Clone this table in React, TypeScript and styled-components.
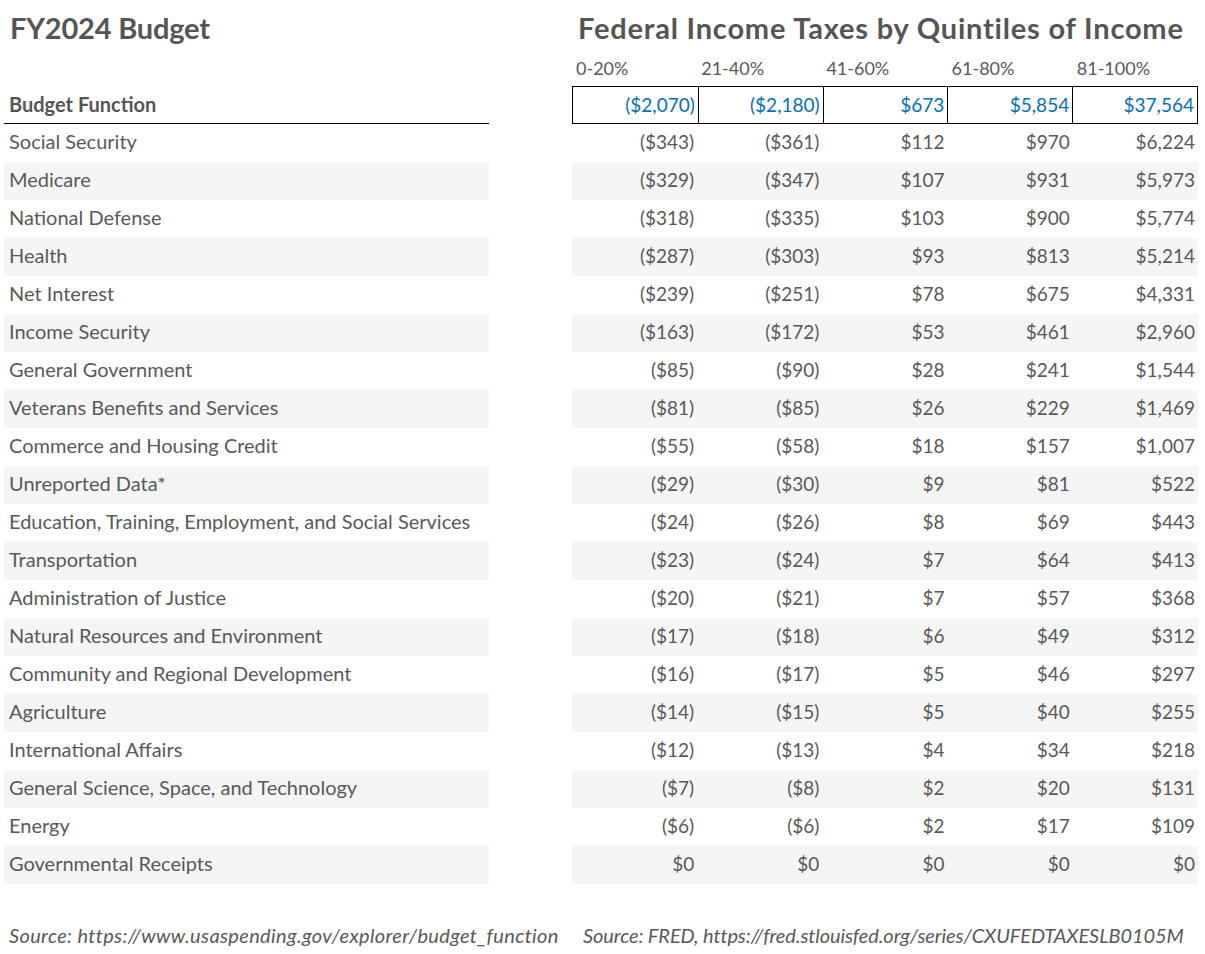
import React from "react";
import styled, { createGlobalStyle } from "styled-components";

const GlobalStyle = createGlobalStyle`
  body {
    margin: 0;
    background: #ffffff;
    font-family: "Lato", "Liberation Sans", sans-serif;
    color: #595959;
  }
`;

const Page = styled.div`
  width: 1205px;
  padding: 0 0 0 4px;
  box-sizing: border-box;
`;

const Tables = styled.div`
  display: grid;
  grid-template-columns: 485px 626px;
  column-gap: 83px;
`;

const Panel = styled.div`
  display: flex;
  flex-direction: column;
`;

const Title = styled.h1<{ $indent: number; $spacing: number }>`
  margin: 0;
  height: 58px;
  padding: 11px 0 0 ${(p) => p.$indent}px;
  box-sizing: border-box;
  font-size: 29px;
  font-weight: 700;
  letter-spacing: ${(p) => p.$spacing}px;
  color: #555555;
  line-height: 34px;
  white-space: nowrap;
`;

const LabelRow = styled.div`
  height: 28px;
  display: grid;
  grid-template-columns: repeat(5, 1fr);
  align-items: start;
`;

const Label = styled.div`
  padding-left: 4px;
  font-size: 18px;
  line-height: 20px;
`;

const HeadLeft = styled.div`
  height: 38px;
  box-sizing: border-box;
  border-bottom: 1px solid #000;
  display: flex;
  align-items: center;
  padding: 0 0 2px 5px;
  font-size: 20px;
  font-weight: 700;
  color: #555555;
`;

const HeadRight = styled.div`
  height: 38px;
  box-sizing: border-box;
  display: grid;
  grid-template-columns: repeat(5, 1fr);
  border: 1px solid #000;
`;

const HeadCell = styled.div`
  display: flex;
  align-items: center;
  justify-content: flex-end;
  padding: 0 3px 2px 0;
  font-size: 19px;
  color: #0070c0;
  & + & {
    border-left: 1px solid #000;
  }
`;

const Row = styled.div<{ $shade: boolean }>`
  height: 38px;
  box-sizing: border-box;
  background: ${(p) => (p.$shade ? "#f5f5f5" : "transparent")};
  display: flex;
  align-items: center;
  padding: 0 0 4px 5px;
  font-size: 20px;
  white-space: nowrap;
`;

const NumRow = styled.div<{ $shade: boolean }>`
  height: 38px;
  box-sizing: border-box;
  padding-bottom: 3px;
  background: ${(p) => (p.$shade ? "#f5f5f5" : "transparent")};
  display: grid;
  grid-template-columns: repeat(5, 1fr);
  align-items: center;
  font-size: 19px;
`;

const Num = styled.div`
  text-align: right;
  padding-right: 3px;
`;

const Footer = styled.div`
  display: grid;
  grid-template-columns: 485px 626px;
  column-gap: 83px;
  margin-top: 39px;
`;

const Source = styled.div<{ $indent: number; $spacing: number }>`
  font-style: italic;
  font-size: 20px;
  line-height: 24px;
  letter-spacing: ${(p) => p.$spacing}px;
  padding-left: ${(p) => p.$indent}px;
  white-space: nowrap;
`;

const quintiles = ["0-20%", "21-40%", "41-60%", "61-80%", "81-100%"];
const totals = ["($2,070)", "($2,180)", "$673", "$5,854", "$37,564"];

const rows: [string, string[]][] = [
  ["Social Security", ["($343)", "($361)", "$112", "$970", "$6,224"]],
  ["Medicare", ["($329)", "($347)", "$107", "$931", "$5,973"]],
  ["National Defense", ["($318)", "($335)", "$103", "$900", "$5,774"]],
  ["Health", ["($287)", "($303)", "$93", "$813", "$5,214"]],
  ["Net Interest", ["($239)", "($251)", "$78", "$675", "$4,331"]],
  ["Income Security", ["($163)", "($172)", "$53", "$461", "$2,960"]],
  ["General Government", ["($85)", "($90)", "$28", "$241", "$1,544"]],
  ["Veterans Benefits and Services", ["($81)", "($85)", "$26", "$229", "$1,469"]],
  ["Commerce and Housing Credit", ["($55)", "($58)", "$18", "$157", "$1,007"]],
  ["Unreported Data*", ["($29)", "($30)", "$9", "$81", "$522"]],
  ["Education, Training, Employment, and Social Services", ["($24)", "($26)", "$8", "$69", "$443"]],
  ["Transportation", ["($23)", "($24)", "$7", "$64", "$413"]],
  ["Administration of Justice", ["($20)", "($21)", "$7", "$57", "$368"]],
  ["Natural Resources and Environment", ["($17)", "($18)", "$6", "$49", "$312"]],
  ["Community and Regional Development", ["($16)", "($17)", "$5", "$46", "$297"]],
  ["Agriculture", ["($14)", "($15)", "$5", "$40", "$255"]],
  ["International Affairs", ["($12)", "($13)", "$4", "$34", "$218"]],
  ["General Science, Space, and Technology", ["($7)", "($8)", "$2", "$20", "$131"]],
  ["Energy", ["($6)", "($6)", "$2", "$17", "$109"]],
  ["Governmental Receipts", ["$0", "$0", "$0", "$0", "$0"]],
];

const App = (): JSX.Element => {
  return (
    <Page>
      <GlobalStyle />
      <Tables>
        <Panel>
          <Title $indent={6} $spacing={-0.2}>FY2024 Budget</Title>
          <LabelRow />
          <HeadLeft>Budget Function</HeadLeft>
          {rows.map(([name], i) => (
            <Row key={name} $shade={i % 2 === 1}>
              {name}
            </Row>
          ))}
        </Panel>
        <Panel>
          <Title $indent={6} $spacing={0.8}>Federal Income Taxes by Quintiles of Income</Title>
          <LabelRow>
            {quintiles.map((q) => (
              <Label key={q}>{q}</Label>
            ))}
          </LabelRow>
          <HeadRight>
            {totals.map((t) => (
              <HeadCell key={t}>{t}</HeadCell>
            ))}
          </HeadRight>
          {rows.map(([name, vals], i) => (
            <NumRow key={name} $shade={i % 2 === 1}>
              {vals.map((v, j) => (
                <Num key={j}>{v}</Num>
              ))}
            </NumRow>
          ))}
        </Panel>
      </Tables>
      <Footer>
        <Source $indent={5} $spacing={0.35}>Source: https://www.usaspending.gov/explorer/budget_function</Source>
        <Source $indent={11} $spacing={-0.1}>Source: FRED, https://fred.stlouisfed.org/series/CXUFEDTAXESLB0105M</Source>
      </Footer>
    </Page>
  );
};

export default App;
